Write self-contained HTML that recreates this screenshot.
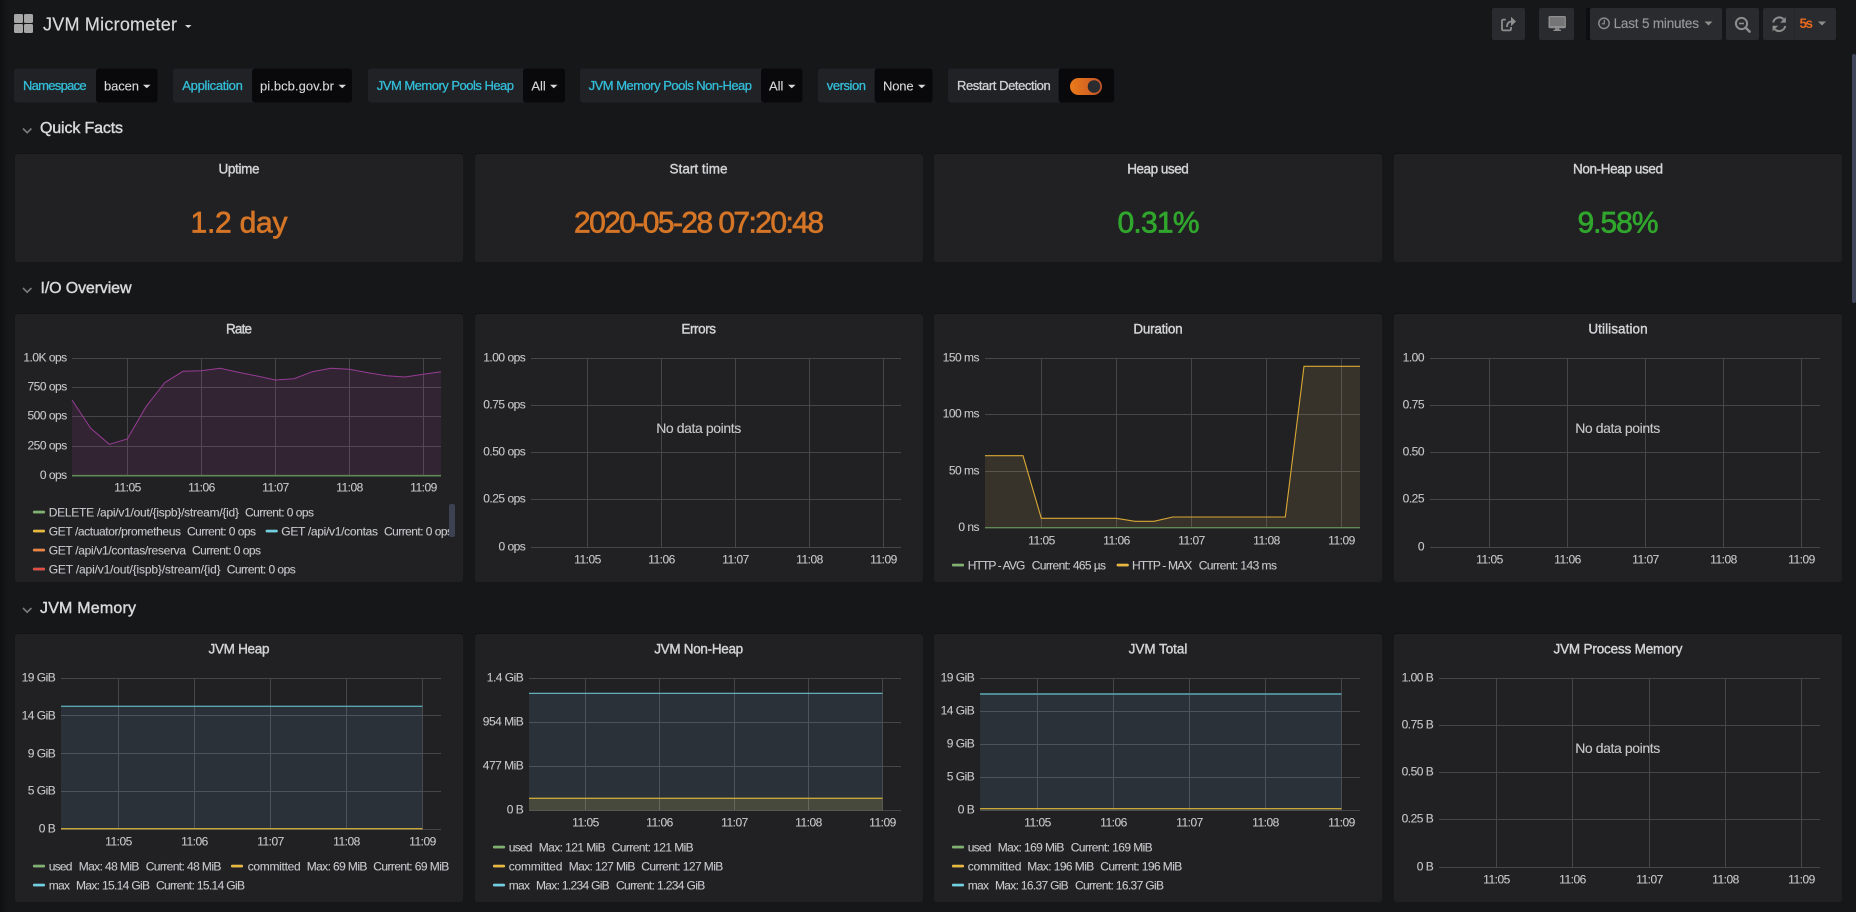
<!DOCTYPE html>
<html lang="en"><head><meta charset="utf-8"><title>JVM Micrometer</title>
<style>
html,body{margin:0;padding:0;width:1856px;height:912px;overflow:hidden;background:#161719}
svg{display:block}
text{font-family:"Liberation Sans",Arial,sans-serif;white-space:pre}
.t{font-size:13.5px;fill:#d3d4d6;text-anchor:middle;stroke:#d3d4d6;stroke-width:.38px}
.h{font-size:16px;fill:#d8d9da;stroke:#d8d9da;stroke-width:.42px}
.a{font-size:12px;fill:#c7c7c9;letter-spacing:-.5px;stroke:#c7c7c9;stroke-width:.1px}
.y{text-anchor:end}
.x{text-anchor:middle}
.l{font-size:12px;fill:#c7c8ca;stroke:#c7c8ca;stroke-width:.1px}
.n{font-size:14px;fill:#c7c7c9;text-anchor:middle;stroke:#c7c7c9;stroke-width:.12px}
.v{font-size:13px;fill:#33bdd8;stroke:#33bdd8;stroke-width:.3px}
.w{font-size:13px;fill:#d8d9da;stroke:#d8d9da;stroke-width:.1px}
.s{font-size:30px;text-anchor:middle;stroke-width:.7px}
.g{stroke:rgba(255,255,255,.17);stroke-width:1;fill:none;shape-rendering:crispEdges}
.b{fill:#2a2b2e}
.p{fill:#212124}
.lb{fill:#212226}
.vb{fill:#09090b}
</style></head><body>
<svg width="1856" height="912" viewBox="0 0 1856 912" xmlns="http://www.w3.org/2000/svg">
<defs>
<linearGradient id="edge" x1="0" x2="1" y1="0" y2="0"><stop offset="0" stop-color="#0f1012"/><stop offset="1" stop-color="#161719"/></linearGradient>
<linearGradient id="tog" x1="0" x2="1" y1="0" y2="0"><stop offset="0" stop-color="#eb7b18"/><stop offset="1" stop-color="#c4542a"/></linearGradient>
</defs>
<rect width="1856" height="912" fill="#161719"/>
<rect width="8" height="912" fill="url(#edge)"/>
<!-- scrollbar -->
<rect x="1852" y="54" width="4" height="249" rx="2" fill="#40465a"/>

<!-- navbar -->
<rect x="14" y="14" width="9" height="9" rx="1.5" fill="#a6a6a6"/><rect x="24" y="14" width="9" height="9" rx="1.5" fill="#a6a6a6"/>
<rect x="14" y="24" width="9" height="9" rx="1.5" fill="#a6a6a6"/><rect x="24" y="24" width="9" height="9" rx="1.5" fill="#a6a6a6"/>
<text x="43" y="30.5" font-size="18" fill="#d8d9da" stroke="#d8d9da" stroke-width=".2" textLength="134">JVM Micrometer</text>
<path d="M185 25h6.5l-3.25 3z" fill="#d8d9da"/>

<rect class="b" x="1492" y="8" width="33" height="32" rx="2"/>
<g fill="none" stroke="#8e8e8e" stroke-width="1.8"><path d="M1511 27v2.2a1.2 1.2 0 0 1-1.2 1.2h-6.6a1.2 1.2 0 0 1-1.2-1.2v-8.4a1.2 1.2 0 0 1 1.2-1.2h2.6"/><path d="M1507 27c0-4 2-5.5 5-5.5"/></g>
<path d="M1511 16.7l5 4.8-5 4.8z" fill="#8e8e8e"/>

<rect class="b" x="1539" y="8" width="35" height="32" rx="2"/>
<path d="M1549.8 16h14.8a1.3 1.3 0 0 1 1.3 1.3v9.6a1.3 1.3 0 0 1-1.3 1.3h-14.8a1.3 1.3 0 0 1-1.3-1.3v-9.6a1.3 1.3 0 0 1 1.3-1.3zM1550 17.6v8h14.4v-8z" fill="#8e8e8e" fill-rule="evenodd"/>
<rect x="1550" y="17.6" width="14.4" height="8" fill="#757577"/>
<path d="M1555 28.2h4.4v1.6h1.6v1.2h-7.6v-1.2h1.6z" fill="#8e8e8e"/>

<rect x="1586" y="8" width="5" height="32" fill="#0d0e10"/>
<rect class="b" x="1590" y="8" width="132" height="32" rx="2"/>
<circle cx="1604" cy="23.3" r="5.2" fill="none" stroke="#8e8e8e" stroke-width="1.4"/>
<path d="M1604.3 19.8v4h-2.6" fill="none" stroke="#8e8e8e" stroke-width="1.2"/>
<text x="1613.6" y="28" font-size="13.5" fill="#96979a" stroke="#96979a" stroke-width=".15" textLength="85.4">Last 5 minutes</text>
<path d="M1704.5 21.5h8l-4 4z" fill="#8e8e8e"/>

<rect class="b" x="1726" y="8" width="33" height="32" rx="2"/>
<circle cx="1741.5" cy="23.5" r="5.6" fill="none" stroke="#8e8e8e" stroke-width="2"/>
<path d="M1739 23.5h5" stroke="#8e8e8e" stroke-width="1.6"/>
<path d="M1745.6 27.6l4 4" stroke="#8e8e8e" stroke-width="2.4" stroke-linecap="round"/>

<rect class="b" x="1763" y="8" width="73" height="32" rx="2"/>
<rect x="1794" y="8" width="1" height="32" fill="#242528"/>
<path d="M1773.2 22.5a6.2 6.2 0 0 1 10.3-3.4" fill="none" stroke="#8e8e8e" stroke-width="2"/>
<path d="M1785.8 17v5.6h-5.6z" fill="#8e8e8e"/>
<path d="M1785.2 26a6.2 6.2 0 0 1-10.3 3.4" fill="none" stroke="#8e8e8e" stroke-width="2"/>
<path d="M1772.6 31.4v-5.6h5.6z" fill="#8e8e8e"/>
<text x="1799.5" y="28" font-size="13.5" font-weight="bold" fill="#e8681c" textLength="13.5">5s</text>
<path d="M1818 21.5h8l-4 4z" fill="#8e8e8e"/>

<!-- variables -->
<g>
<rect class="lb" x="14" y="68.5" width="88" height="34" rx="3"/><rect class="vb" x="96" y="68.5" width="61.5" height="34" rx="3"/>
<text class="v" x="23" y="90" textLength="63.6">Namespace</text><text class="w" x="104" y="90.5" textLength="35">bacen</text><path d="M143 84.8h7.5l-3.75 3.4z" fill="#d8d9da"/>

<rect class="lb" x="173" y="68.5" width="85" height="34" rx="3"/><rect class="vb" x="252" y="68.5" width="100" height="34" rx="3"/>
<text class="v" x="182.3" y="90" textLength="60.5">Application</text><text class="w" x="260" y="90.5" textLength="74">pi.bcb.gov.br</text><path d="M338.5 84.8h7.5l-3.75 3.4z" fill="#d8d9da"/>

<rect class="lb" x="368" y="68.5" width="160" height="34" rx="3"/><rect class="vb" x="523" y="68.5" width="42" height="34" rx="3"/>
<text class="v" x="376.8" y="90" textLength="137.2">JVM Memory Pools Heap</text><text class="w" x="531.4" y="90.5" textLength="14.4">All</text><path d="M550 84.8h7.5l-3.75 3.4z" fill="#d8d9da"/>

<rect class="lb" x="580" y="68.5" width="186" height="34" rx="3"/><rect class="vb" x="761" y="68.5" width="41.5" height="34" rx="3"/>
<text class="v" x="588.6" y="90" textLength="163.4">JVM Memory Pools Non-Heap</text><text class="w" x="769" y="90.5" textLength="14.4">All</text><path d="M788 84.8h7.5l-3.75 3.4z" fill="#d8d9da"/>

<rect class="lb" x="818" y="68.5" width="62" height="34" rx="3"/><rect class="vb" x="874.6" y="68.5" width="58" height="34" rx="3"/>
<text class="v" x="826.8" y="90" textLength="39.2">version</text><text class="w" x="883" y="90.5" textLength="30.6">None</text><path d="M918 84.8h7.5l-3.75 3.4z" fill="#d8d9da"/>

<rect class="lb" x="948" y="68.5" width="116" height="34" rx="3"/><rect class="vb" x="1058.6" y="68.5" width="55.5" height="34" rx="3"/>
<text x="957" y="90" font-size="13" fill="#d0d1d3" textLength="93.7" stroke="#d0d1d3" stroke-width=".3">Restart Detection</text>
<rect x="1070" y="78" width="32" height="17" rx="8.5" fill="url(#tog)"/><circle cx="1094" cy="86.5" r="6.3" fill="#2b2c30"/>
</g>

<!-- section headings -->
<path d="M23 128.5l4.2 4.2 4.2-4.2" fill="none" stroke="#7b7b7b" stroke-width="1.6"/>
<text class="h" x="40" y="133" textLength="83">Quick Facts</text>
<path d="M23 288l4.2 4.2 4.2-4.2" fill="none" stroke="#7b7b7b" stroke-width="1.6"/>
<text class="h" x="40.5" y="293" textLength="91">I/O Overview</text>
<path d="M23 608l4.2 4.2 4.2-4.2" fill="none" stroke="#7b7b7b" stroke-width="1.6"/>
<text class="h" x="40" y="613" textLength="96">JVM Memory</text>

<!-- panel top edges -->
<path d="M15 153.5H463M475 153.5H923M934 153.5H1382M1394 153.5H1842M15 313.5H463M475 313.5H923M934 313.5H1382M1394 313.5H1842M15 633.5H463M475 633.5H923M934 633.5H1382M1394 633.5H1842" stroke="#111214" stroke-width="1" shape-rendering="crispEdges"/>

<!-- panels row 1 -->
<rect class="p" x="15" y="154" width="448" height="108" rx="3"/>
<rect class="p" x="475" y="154" width="448" height="108" rx="3"/>
<rect class="p" x="934" y="154" width="448" height="108" rx="3"/>
<rect class="p" x="1394" y="154" width="448" height="108" rx="3"/>
<text class="t" x="239" y="173.5" textLength="41">Uptime</text>
<text class="t" x="698.5" y="173.5" textLength="58">Start time</text>
<text class="t" x="1158" y="173.5" textLength="61.5">Heap used</text>
<text class="t" x="1618" y="173.5" textLength="90">Non-Heap used</text>
<text class="s" x="239" y="232.5" fill="#d57526" stroke="#d57526" textLength="97">1.2 day</text>
<text class="s" x="699" y="232.5" fill="#d57526" stroke="#d57526" textLength="250">2020-05-28 07:20:48</text>
<text class="s" x="1158.5" y="232.5" fill="#30a62d" stroke="#30a62d" textLength="82">0.31%</text>
<text class="s" x="1618" y="232.5" fill="#30a62d" stroke="#30a62d" textLength="81">9.58%</text>

<!-- panels row 2 -->
<rect class="p" x="15" y="314" width="448" height="268" rx="3"/>
<rect class="p" x="475" y="314" width="448" height="268" rx="3"/>
<rect class="p" x="934" y="314" width="448" height="268" rx="3"/>
<rect class="p" x="1394" y="314" width="448" height="268" rx="3"/>
<text class="t" x="239" y="333.5" textLength="26">Rate</text>
<text class="t" x="698.7" y="333.5" textLength="34.7">Errors</text>
<text class="t" x="1158" y="333.5" textLength="49.3">Duration</text>
<text class="t" x="1618" y="333.5" textLength="59.3">Utilisation</text>

<!-- Rate -->
<path d="M72 400L90.7 428.3 109.3 444.3 127.3 439 146 406.7 164.7 382.7 183 371.3 201.3 370.7 220 368.3 238.3 372.3 257 376 275.3 380 294 378.7 312.3 371.7 331 368.3 349.3 369.3 368 372.7 386.3 375.7 405 377 423.3 374.3 441 371.7V475.5H72z" fill="#322433"/>
<path class="g" d="M72 358.5H441M72 387.5H441M72 416.5H441M72 446.5H441M72 475.5H441M127.5 358V476M201.5 358V476M275.5 358V476M349.5 358V476M423.5 358V476"/>
<path d="M72 400L90.7 428.3 109.3 444.3 127.3 439 146 406.7 164.7 382.7 183 371.3 201.3 370.7 220 368.3 238.3 372.3 257 376 275.3 380 294 378.7 312.3 371.7 331 368.3 349.3 369.3 368 372.7 386.3 375.7 405 377 423.3 374.3 441 371.7" fill="none" stroke="#963c93" stroke-width="1"/>
<path d="M72 475.7H441" stroke="#5f8a55" stroke-width="1.6"/>
<g class="a y"><text x="66.7" y="361.5">1.0K ops</text><text x="66.7" y="390.5">750 ops</text><text x="66.7" y="419.5">500 ops</text><text x="66.7" y="449.5">250 ops</text><text x="66.7" y="479">0 ops</text></g>
<g class="a x"><text x="127.5" y="491.5">11:05</text><text x="201.5" y="491.5">11:06</text><text x="275.5" y="491.5">11:07</text><text x="349.5" y="491.5">11:08</text><text x="423.5" y="491.5">11:09</text></g>
<g class="l">
<rect x="33" y="510.8" width="12" height="2.6" rx="1" fill="#7eb26d"/><text x="48.7" y="516.5" textLength="190.3">DELETE /api/v1/out/{ispb}/stream/{id}</text><text x="245" y="516.5" textLength="69">Current: 0 ops</text>
<rect x="33" y="529.8" width="12" height="2.6" rx="1" fill="#eab839"/><text x="48.7" y="535.5" textLength="132.3">GET /actuator/prometheus</text><text x="187" y="535.5" textLength="69">Current: 0 ops</text>
<rect x="265.7" y="529.8" width="12" height="2.6" rx="1" fill="#6ed0e0"/><text x="281.3" y="535.5" textLength="96.7">GET /api/v1/contas</text><text x="384" y="535.5" textLength="69">Current: 0 ops</text>
<rect x="33" y="548.8" width="12" height="2.6" rx="1" fill="#ef843c"/><text x="48.7" y="554.5" textLength="137.3">GET /api/v1/contas/reserva</text><text x="192" y="554.5" textLength="69">Current: 0 ops</text>
<rect x="33" y="567.8" width="12" height="2.6" rx="1" fill="#e24d42"/><text x="48.7" y="573.5" textLength="172">GET /api/v1/out/{ispb}/stream/{id}</text><text x="226.7" y="573.5" textLength="69">Current: 0 ops</text>
</g>
<rect x="450" y="500" width="13" height="75" fill="#212124"/>
<rect x="449" y="504" width="6" height="33" rx="2" fill="#3d4253"/>

<!-- Errors -->
<path class="g" d="M531 358.5H901M531 405.5H901M531 452.5H901M531 499.5H901M531 547.5H901M587.5 358V548M661.5 358V548M735.5 358V548M809.5 358V548M883.5 358V548"/>
<g class="a y"><text x="525.3" y="361.5">1.00 ops</text><text x="525.3" y="408.5">0.75 ops</text><text x="525.3" y="455.5">0.50 ops</text><text x="525.3" y="502.5">0.25 ops</text><text x="525.3" y="550.5">0 ops</text></g>
<g class="a x"><text x="587.5" y="563.5">11:05</text><text x="661.5" y="563.5">11:06</text><text x="735.5" y="563.5">11:07</text><text x="809.5" y="563.5">11:08</text><text x="883.5" y="563.5">11:09</text></g>
<text class="n" x="698.7" y="433" textLength="85">No data points</text>

<!-- Duration -->
<path d="M985 455.7H1023L1041.3 518.3H1116.3L1135 521.3H1154L1172.7 517H1285.3L1304 366.3H1360V527.5H985z" fill="#37322a"/>
<path class="g" d="M985 358.5H1360M985 414.5H1360M985 471.5H1360M985 527.5H1360M1041.5 358V528M1116.5 358V528M1191.5 358V528M1266.5 358V528M1341.5 358V528"/>
<path d="M985 455.7H1023L1041.3 518.3H1116.3L1135 521.3H1154L1172.7 517H1285.3L1304 366.3H1360" fill="none" stroke="#d9a834" stroke-width="1.1"/>
<path d="M985 527.7H1360" stroke="#5f8a55" stroke-width="1.3"/>
<g class="a y"><text x="979" y="361.5">150 ms</text><text x="979" y="417.5">100 ms</text><text x="979" y="474.5">50 ms</text><text x="979" y="531">0 ns</text></g>
<g class="a x"><text x="1041.5" y="544.5">11:05</text><text x="1116.5" y="544.5">11:06</text><text x="1191.5" y="544.5">11:07</text><text x="1266.5" y="544.5">11:08</text><text x="1341.5" y="544.5">11:09</text></g>
<g class="l">
<rect x="952" y="563.8" width="12" height="2.6" rx="1" fill="#7eb26d"/><text x="967.7" y="569.5" textLength="57.7">HTTP - AVG</text><text x="1031.7" y="569.5" textLength="74.3">Current: 465 µs</text>
<rect x="1116.7" y="563.8" width="12" height="2.6" rx="1" fill="#eab839"/><text x="1132" y="569.5" textLength="60.3">HTTP - MAX</text><text x="1198.7" y="569.5" textLength="78.3">Current: 143 ms</text>
</g>

<!-- Utilisation -->
<path class="g" d="M1430 358.5H1820M1430 405.5H1820M1430 452.5H1820M1430 499.5H1820M1430 547.5H1820M1489.5 358V548M1567.5 358V548M1645.5 358V548M1723.5 358V548M1801.5 358V548"/>
<g class="a y"><text x="1424" y="361.5">1.00</text><text x="1424" y="408.5">0.75</text><text x="1424" y="455.5">0.50</text><text x="1424" y="502.5">0.25</text><text x="1424" y="550.5">0</text></g>
<g class="a x"><text x="1489.5" y="563.5">11:05</text><text x="1567.5" y="563.5">11:06</text><text x="1645.5" y="563.5">11:07</text><text x="1723.5" y="563.5">11:08</text><text x="1801.5" y="563.5">11:09</text></g>
<text class="n" x="1617.7" y="433" textLength="85">No data points</text>

<!-- panels row 3 -->
<rect class="p" x="15" y="634" width="448" height="268" rx="3"/>
<rect class="p" x="475" y="634" width="448" height="268" rx="3"/>
<rect class="p" x="934" y="634" width="448" height="268" rx="3"/>
<rect class="p" x="1394" y="634" width="448" height="268" rx="3"/>
<text class="t" x="239" y="653.5" textLength="61">JVM Heap</text>
<text class="t" x="698.7" y="653.5" textLength="89">JVM Non-Heap</text>
<text class="t" x="1158" y="653.5" textLength="58.7">JVM Total</text>
<text class="t" x="1618" y="653.5" textLength="129">JVM Process Memory</text>

<!-- Heap -->
<rect x="61" y="706" width="361.5" height="123.5" fill="#2a3139"/>
<path class="g" d="M61 678.5H441M61 715.5H441M61 753.5H441M61 791.5H441M61 829.5H441M118.5 678V830M194.5 678V830M270.5 678V830M346.5 678V830M422.5 678V830"/>
<path d="M61 706.3H422.5" stroke="#5aa5b2" stroke-width="1.3"/>
<path d="M61 828.7H422.5" stroke="#c9a63a" stroke-width="1.3"/>
<g class="a y"><text x="55.3" y="681.5">19 GiB</text><text x="55.3" y="719.5">14 GiB</text><text x="55.3" y="757.5">9 GiB</text><text x="55.3" y="794.5">5 GiB</text><text x="55.3" y="832.5">0 B</text></g>
<g class="a x"><text x="118.5" y="845.5">11:05</text><text x="194.5" y="845.5">11:06</text><text x="270.5" y="845.5">11:07</text><text x="346.5" y="845.5">11:08</text><text x="422.5" y="845.5">11:09</text></g>
<g class="l">
<rect x="33" y="864.8" width="12" height="2.6" rx="1" fill="#7eb26d"/><text x="48.7" y="870.5" textLength="23.7">used</text><text x="78.7" y="870.5" textLength="60.7">Max: 48 MiB</text><text x="145.7" y="870.5" textLength="75.7">Current: 48 MiB</text>
<rect x="231" y="864.8" width="12" height="2.6" rx="1" fill="#eab839"/><text x="247.7" y="870.5" textLength="53">committed</text><text x="306.7" y="870.5" textLength="60.7">Max: 69 MiB</text><text x="373.3" y="870.5" textLength="76">Current: 69 MiB</text>
<rect x="33" y="883.8" width="12" height="2.6" rx="1" fill="#6ed0e0"/><text x="48.7" y="889.5" textLength="21.3">max</text><text x="76" y="889.5" textLength="74">Max: 15.14 GiB</text><text x="156" y="889.5" textLength="89">Current: 15.14 GiB</text>
</g>

<!-- Non-Heap -->
<rect x="529" y="693" width="353.5" height="105" fill="#2a3139"/>
<rect x="529" y="798" width="353.5" height="12.5" fill="#48493d"/>
<path class="g" d="M529 678.5H901M529 722.5H901M529 766.5H901M529 810.5H901M585.5 678V811M659.5 678V811M734.5 678V811M808.5 678V811M882.5 678V811"/>
<path d="M529 693.3H882.5" stroke="#6bbfcc" stroke-width="1.1"/>
<path d="M529 798.3H882.5" stroke="#c9a63a" stroke-width="1.3"/>
<g class="a y"><text x="523.3" y="681.5">1.4 GiB</text><text x="523.3" y="725.5">954 MiB</text><text x="523.3" y="769.5">477 MiB</text><text x="523.3" y="813.5">0 B</text></g>
<g class="a x"><text x="585.5" y="826.5">11:05</text><text x="659.5" y="826.5">11:06</text><text x="734.5" y="826.5">11:07</text><text x="808.5" y="826.5">11:08</text><text x="882.5" y="826.5">11:09</text></g>
<g class="l">
<rect x="493" y="845.8" width="12" height="2.6" rx="1" fill="#7eb26d"/><text x="508.7" y="851.5" textLength="23.7">used</text><text x="538.7" y="851.5" textLength="67">Max: 121 MiB</text><text x="611.7" y="851.5" textLength="82">Current: 121 MiB</text>
<rect x="493" y="864.8" width="12" height="2.6" rx="1" fill="#eab839"/><text x="508.7" y="870.5" textLength="53.7">committed</text><text x="568.7" y="870.5" textLength="66.7">Max: 127 MiB</text><text x="641.3" y="870.5" textLength="82">Current: 127 MiB</text>
<rect x="493" y="883.8" width="12" height="2.6" rx="1" fill="#6ed0e0"/><text x="508.7" y="889.5" textLength="21.3">max</text><text x="536" y="889.5" textLength="73.7">Max: 1.234 GiB</text><text x="616" y="889.5" textLength="89.3">Current: 1.234 GiB</text>
</g>

<!-- Total -->
<rect x="980" y="694" width="361.5" height="116.5" fill="#2a3139"/>
<path class="g" d="M980 678.5H1360M980 711.5H1360M980 744.5H1360M980 777.5H1360M980 810.5H1360M1037.5 678V811M1113.5 678V811M1189.5 678V811M1265.5 678V811M1341.5 678V811"/>
<path d="M980 694H1341.5" stroke="#4f8a94" stroke-width="2"/>
<path d="M980 808.7H1341.5" stroke="#c9a63a" stroke-width="1.4"/>
<g class="a y"><text x="974.3" y="681.5">19 GiB</text><text x="974.3" y="714.5">14 GiB</text><text x="974.3" y="747.5">9 GiB</text><text x="974.3" y="780.5">5 GiB</text><text x="974.3" y="813.5">0 B</text></g>
<g class="a x"><text x="1037.5" y="826.5">11:05</text><text x="1113.5" y="826.5">11:06</text><text x="1189.5" y="826.5">11:07</text><text x="1265.5" y="826.5">11:08</text><text x="1341.5" y="826.5">11:09</text></g>
<g class="l">
<rect x="952" y="845.8" width="12" height="2.6" rx="1" fill="#7eb26d"/><text x="967.7" y="851.5" textLength="23.7">used</text><text x="997.7" y="851.5" textLength="66.7">Max: 169 MiB</text><text x="1070.7" y="851.5" textLength="82">Current: 169 MiB</text>
<rect x="952" y="864.8" width="12" height="2.6" rx="1" fill="#eab839"/><text x="967.7" y="870.5" textLength="53.7">committed</text><text x="1027.3" y="870.5" textLength="67">Max: 196 MiB</text><text x="1100.3" y="870.5" textLength="82">Current: 196 MiB</text>
<rect x="952" y="883.8" width="12" height="2.6" rx="1" fill="#6ed0e0"/><text x="967.7" y="889.5" textLength="21.3">max</text><text x="995" y="889.5" textLength="73.7">Max: 16.37 GiB</text><text x="1075" y="889.5" textLength="89">Current: 16.37 GiB</text>
</g>

<!-- Process -->
<path class="g" d="M1439 678.5H1820M1439 725.5H1820M1439 772.5H1820M1439 819.5H1820M1439 867.5H1820M1496.5 678V868M1572.5 678V868M1649.5 678V868M1725.5 678V868M1801.5 678V868"/>
<g class="a y"><text x="1433.3" y="681.5">1.00 B</text><text x="1433.3" y="728.5">0.75 B</text><text x="1433.3" y="775.5">0.50 B</text><text x="1433.3" y="822.5">0.25 B</text><text x="1433.3" y="870.5">0 B</text></g>
<g class="a x"><text x="1496.5" y="883.5">11:05</text><text x="1572.5" y="883.5">11:06</text><text x="1649.5" y="883.5">11:07</text><text x="1725.5" y="883.5">11:08</text><text x="1801.5" y="883.5">11:09</text></g>
<text class="n" x="1617.7" y="753" textLength="85">No data points</text>
</svg>
</body></html>
